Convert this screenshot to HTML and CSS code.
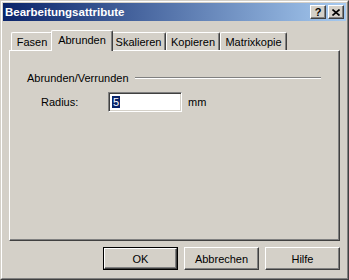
FILE: index.html
```html
<!DOCTYPE html>
<html lang="de">
<head>
  <meta charset="UTF-8">
  <link rel="stylesheet" href="styles.css">
</head>
<body>

<!-- Dialog window -->
<div class="window">
  <div class="frame">

    <div class="titlebar">
      <span class="title">Bearbeitungsattribute</span>
      <div class="caption-btns">
        <span class="cap-btn help">?</span>
        <span class="cap-btn">
          <svg width="8" height="7" viewBox="0 0 8 7"><path d="M0.5 0.5 L7.5 6.5 M7.5 0.5 L0.5 6.5" stroke="#000" stroke-width="1.6" fill="none"/></svg>
        </span>
      </div>
    </div>

    <div class="tabs">
      <span class="tab" style="width:42px">Fasen</span>
      <span class="tab active" style="width:62px">Abrunden</span>
      <span class="tab" style="width:55px">Skalieren</span>
      <span class="tab" style="width:54px">Kopieren</span>
      <span class="tab" style="width:67px">Matrixkopie</span>
    </div>

    <div class="panel">
      <div class="group-head">
        <span>Abrunden/Verrunden</span>
        <span class="etched"></span>
      </div>
      <div class="field">
        <span class="field-label">Radius:</span>
        <span class="textbox"><span class="sel">5</span></span>
        <span class="unit">mm</span>
      </div>
    </div>

    <div class="buttons">
      <span class="btn default"><span>OK</span></span>
      <span class="btn">Abbrechen</span>
      <span class="btn">Hilfe</span>
    </div>

  </div>
</div>

</body>
</html>
```

FILE: styles.css
```css
* {
  box-sizing: border-box;
}

body {
  margin: 0;
  font-family: 'Liberation Sans', Arial, sans-serif;
  font-size: 11px;
  color: #000;
  background: #d4d0c8;
}

.window {
  width: 349px;
  height: 280px;
  background: #d4d0c8;
  border: 1px solid;
  border-color: #d4d0c8 #404040 #404040 #d4d0c8;
}

.frame {
  height: 100%;
  padding: 1px;
  border: 1px solid;
  border-color: #fff #808080 #808080 #fff;
  display: flex;
  flex-direction: column;
}

/* Title bar */
.titlebar {
  height: 18px;
  display: flex;
  align-items: center;
  justify-content: space-between;
  padding: 0 2px 0 2px;
  background: linear-gradient(to right, #0a246a, #a6caf0);
}

.title {
  color: #fff;
  font-weight: bold;
  font-size: 11.5px;
}

.caption-btns {
  display: flex;
  gap: 2px;
}

.cap-btn {
  width: 16px;
  height: 14px;
  display: flex;
  align-items: center;
  justify-content: center;
  background: #d4d0c8;
  border: 1px solid;
  border-color: #fff #404040 #404040 #fff;
  box-shadow: inset -1px -1px 0 #808080;
  font-weight: bold;
  font-size: 11px;
  line-height: 1;
}

/* Tabs */
.tabs {
  display: flex;
  align-items: flex-end;
  height: 20px;
  margin: 9px 0 0 8px;
}

.tab {
  height: 18px;
  display: flex;
  align-items: center;
  justify-content: center;
  padding-top: 1px;
  border-top: 1px solid #fff;
  border-left: 1px solid #fff;
  border-right: 1px solid #404040;
  border-radius: 2px 2px 0 0;
  box-shadow: inset -1px 0 0 #808080;
  background: #d4d0c8;
}

.tab.active {
  height: 21px;
  margin: 0 -2px -1px -2px;
  padding-top: 0;
  padding-bottom: 3px;
  position: relative;
  z-index: 1;
}

/* Tab panel */
.panel {
  height: 191px;
  margin: 0 6px 0 6px;
  padding: 20px 17px 0 17px;
  border: 1px solid;
  border-color: #fff #404040 #404040 #fff;
  box-shadow: inset -1px -1px 0 #808080;
}

.group-head {
  display: flex;
  align-items: center;
  gap: 6px;
  height: 14px;
  padding-right: 1px;
}

.etched {
  flex: 1;
  height: 2px;
  border-top: 1px solid #808080;
  border-bottom: 1px solid #fff;
  margin-top: -1px;
}

.field {
  display: flex;
  align-items: center;
  margin-top: 7px;
}

.field-label {
  width: 81px;
  padding-left: 14px;
}

.textbox {
  width: 74px;
  height: 20px;
  padding: 3px 0 0 3px;
  background: #fff;
  border: 1px solid;
  border-color: #808080 #fff #fff #808080;
  box-shadow: inset 1px 1px 0 #404040, inset -1px -1px 0 #d4d0c8;
}

.sel {
  display: inline-block;
  height: 12px;
  line-height: 12px;
  padding: 0 1px;
  background: #0a246a;
  color: #fff;
}

.unit {
  margin-left: 6px;
}

/* Dialog buttons */
.buttons {
  display: flex;
  justify-content: flex-end;
  gap: 6px;
  margin: 6px 6px 0 0;
}

.btn {
  width: 75px;
  height: 23px;
  display: flex;
  align-items: center;
  justify-content: center;
  background: #d4d0c8;
  border: 1px solid;
  border-color: #fff #404040 #404040 #fff;
  box-shadow: inset -1px -1px 0 #808080;
}

.btn.default {
  border: 1px solid #000;
  box-shadow: none;
  padding: 0;
}

.btn.default span {
  width: 100%;
  height: 100%;
  display: flex;
  align-items: center;
  justify-content: center;
  border: 1px solid;
  border-color: #fff #404040 #404040 #fff;
  box-shadow: inset -1px -1px 0 #808080;
}
```
